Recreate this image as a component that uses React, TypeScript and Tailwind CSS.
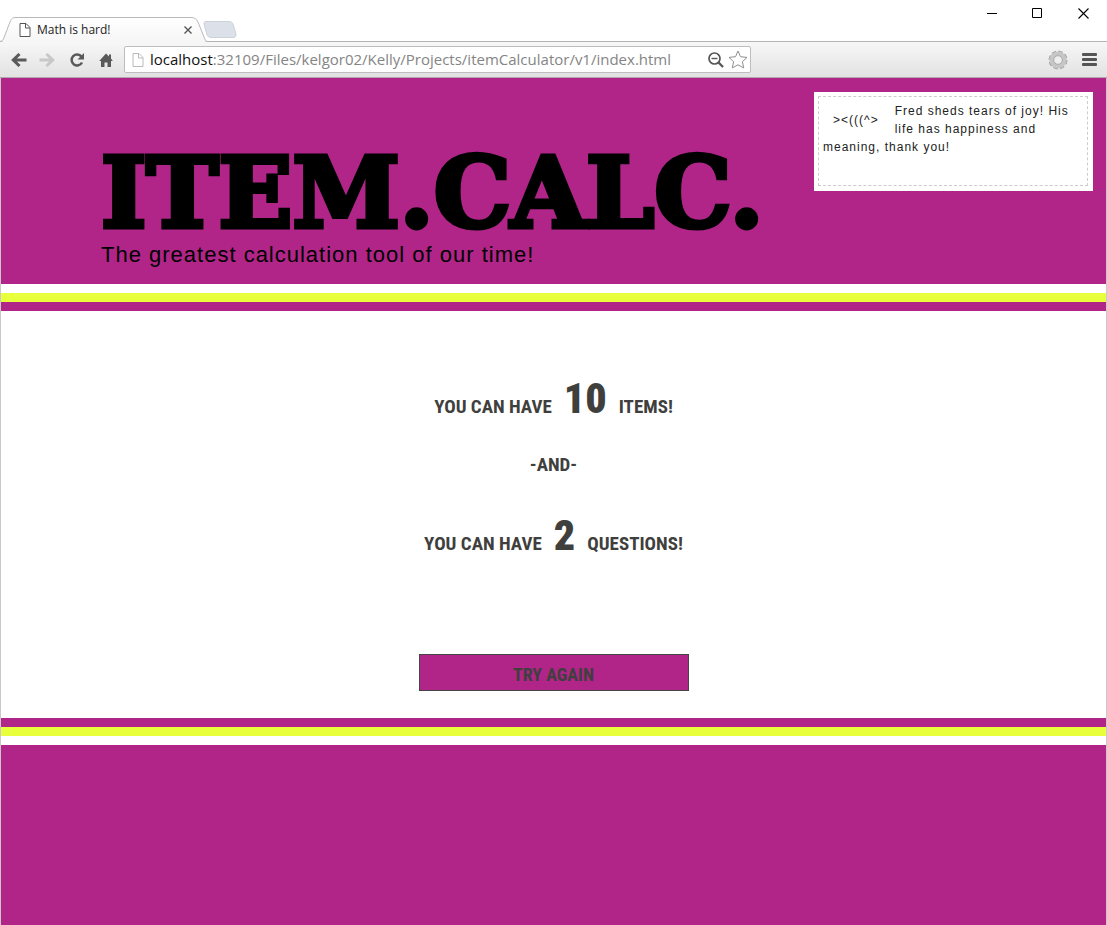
import React from "react";

function PageIcon({ className }: { className: string }) {
  return (
    <svg className={className} width="12" height="16" viewBox="0 0 12 16" fill="#fff" stroke="currentColor" aria-hidden="true">
      <path d="M1 1.5h6l4 4v9H1z" />
      <path d="M6.5 1.5v4.5H11" fill="none" />
    </svg>
  );
}

function TabStrip() {
  return (
    <div className="flex h-[42px] justify-between border-b border-[#b4b4b4] bg-white">
      <div className="flex items-end">
        <div className="relative -mb-px h-[26px] w-[207px]">
          <svg className="absolute inset-0" width="207" height="26" viewBox="0 0 207 26" aria-hidden="true">
            <defs>
              <linearGradient id="tab" x1="0" y1="0" x2="0" y2="1">
                <stop offset="0" stopColor="#ffffff" />
                <stop offset="1" stopColor="#f6f6f6" />
              </linearGradient>
            </defs>
            <path
              d="M0 25.5C3 25 4 22 5 19L10 6C11.500 2 13 1.500 16 1.500H191C195 1.500 196.500 3 198 6L204 21C205 24 206 25 207 25.500"
              fill="url(#tab)"
              stroke="#b9b9b9"
            />
            <path d="M3 25.500H205" stroke="#f6f6f6" />
          </svg>
          <div className="relative flex h-full items-center pr-[14px] pl-[19px] text-[#222]">
            <PageIcon className="mt-0.5 text-[#555]" />
            <span className="mt-0.5 ml-1.5 flex-1 text-[12px]">Math is hard!</span>
            <button type="button" aria-label="Close tab" className="mt-0.5 text-[#555]">
              <svg width="10" height="10" viewBox="0 0 10 10" stroke="currentColor" strokeWidth="1.4" aria-hidden="true">
                <path d="M1.500 1.500l7 7M8.500 1.500l-7 7" />
              </svg>
            </button>
          </div>
        </div>
        <button type="button" aria-label="New tab" className="mb-[3px] -ml-1">
          <svg width="34" height="17" viewBox="0 0 34 17" aria-hidden="true">
            <path d="M3 .5H26Q29 .5 30 3L33 13Q33.500 16 31 16.500H8Q5 16.500 4 14L1 3Q.5 .5 3 .5Z" fill="#dce0e8" stroke="#cdd1d9" />
          </svg>
        </button>
      </div>
      <div className="flex h-[26px] items-center pr-[18px] text-black">
        <button type="button" aria-label="Minimize">
          <svg width="11" height="11" viewBox="0 0 11 11" stroke="currentColor" aria-hidden="true">
            <path d="M0 5.500H10" />
          </svg>
        </button>
        <button type="button" aria-label="Maximize" className="ml-[34px]">
          <svg width="11" height="11" viewBox="0 0 11 11" stroke="currentColor" fill="none" aria-hidden="true">
            <path d="M.5 .5h9v9h-9z" />
          </svg>
        </button>
        <button type="button" aria-label="Close window" className="ml-[35px]">
          <svg width="11" height="11" viewBox="0 0 11 11" stroke="currentColor" strokeWidth="1.1" aria-hidden="true">
            <path d="M.5 .5l10 10M10.500 .5l-10 10" />
          </svg>
        </button>
      </div>
    </div>
  );
}

function Toolbar() {
  return (
    <div className="flex h-9 items-center border-b border-[#b0a8ae] bg-linear-to-b from-[#f7f7f7] to-[#e2e2e2] pr-[10px] pl-[11px]">
      <button type="button" aria-label="Back" className="text-[#5a5a5a]">
        <svg width="16" height="14" viewBox="0 0 16 14" fill="none" stroke="currentColor" strokeWidth="3" aria-hidden="true">
          <path d="M15.500 7H3M8.500 1L2.300 7l6.200 6" />
        </svg>
      </button>
      <button type="button" aria-label="Forward" className="ml-3 text-[#c8c8c8]">
        <svg width="16" height="14" viewBox="0 0 16 14" fill="none" stroke="currentColor" strokeWidth="3" aria-hidden="true">
          <path d="M.5 7H13M7.500 1l6.200 6-6.200 6" />
        </svg>
      </button>
      <button type="button" aria-label="Reload" className="ml-3.5 text-[#5a5a5a]">
        <svg width="16" height="16" viewBox="0 0 16 16" fill="none" stroke="currentColor" strokeWidth="2.500" aria-hidden="true">
          <path d="M12.500 4.600A5.500 5.500 0 1 0 13 10.500" />
          <path d="M15 1v6.500H8.500z" fill="currentColor" stroke="none" />
        </svg>
      </button>
      <button type="button" aria-label="Home" className="ml-3.5 text-[#5a5a5a]">
        <svg width="14" height="14" viewBox="0 0 14 14" fill="currentColor" aria-hidden="true">
          <path d="M7 .5L10 3.500V1.500h2v4L13.800 8H12v6H8.500V9.500h-3V14H2V8H.2z" />
        </svg>
      </button>
      <div className="ml-[11px] flex h-[27px] w-[627px] items-center rounded-xs border border-[#bdbdbd] bg-white pr-[2px] pl-[7px]">
        <PageIcon className="text-[#bbb]" />
        <p className="ml-1.5 flex-1 text-[15px] whitespace-nowrap text-[#858585]">
          <span className="text-[#111]">localhost</span>
          :32109/Files/kelgor02/Kelly/Projects/itemCalculator/v1/index.html
        </p>
        <button type="button" aria-label="Zoom" className="text-[#555]">
          <svg width="16" height="16" viewBox="0 0 16 16" fill="none" stroke="currentColor" aria-hidden="true">
            <circle cx="6.500" cy="6.500" r="5.500" strokeWidth="1.700" />
            <path d="M3.500 6.500h6" strokeWidth="1.400" />
            <path d="M10.300 10.300l4.700 4.700" strokeWidth="2.300" />
          </svg>
        </button>
        <button type="button" aria-label="Bookmark this page" className="ml-1 text-[#8e8e8e]">
          <svg width="20" height="19" viewBox="0 0 20 19" fill="#fff" stroke="currentColor" strokeLinejoin="round" aria-hidden="true">
            <path d="M10 1l2.500 5.700 6.500.7-4.600 4.300 1.300 6.200L10 14.800l-5.700 3.100 1.300-6.200L1 7.400l6.500-.7z" />
          </svg>
        </button>
      </div>
      <button type="button" aria-label="Extension" className="ml-auto">
        <svg width="20" height="20" viewBox="0 0 20 20" fill="none" aria-hidden="true">
          <circle cx="10" cy="10" r="8" stroke="#a9a9a9" strokeWidth="3" strokeDasharray="4.283 2" />
          <circle cx="10" cy="10" r="6.200" stroke="#c6c6c6" strokeWidth="4.600" />
          <circle cx="10" cy="10" r="4.300" stroke="#aaa" strokeWidth="1" fill="#eee" />
        </svg>
      </button>
      <button type="button" aria-label="Menu" className="ml-3.5 text-[#555]">
        <svg width="15" height="13" viewBox="0 0 15 13" fill="currentColor" aria-hidden="true">
          <rect y="0" width="15" height="3" rx="1" />
          <rect y="5" width="15" height="3" rx="1" />
          <rect y="10" width="15" height="3" rx="1" />
        </svg>
      </button>
    </div>
  );
}

function Result({ count, noun }: { count: number; noun: string }) {
  return (
    <p className="flex items-baseline justify-center gap-3 leading-5">
      <span>YOU CAN HAVE</span>
      <strong className="text-[42px] leading-[54px]">{count}</strong>
      <span>{noun}!</span>
    </p>
  );
}

export default function App() {
  return (
    <div className="flex min-h-screen flex-col bg-white font-['Liberation_Sans',sans-serif]">
      <div className="font-['Open_Sans','Noto_Sans',sans-serif]">
        <TabStrip />
        <Toolbar />
      </div>
      <div className="flex flex-1 flex-col border-x border-[#c9c9c9]">
        <header className="flex h-[206px] items-start justify-between bg-[#b12589] pr-[13px] pl-[100px] text-black">
          <div className="pt-[66px]">
            <h1 className="text-[97px] leading-[98px] font-bold font-['DejaVu_Serif',serif] [-webkit-text-stroke:5px_black]">
              ITEM.CALC.
            </h1>
            <p className="text-[22px] leading-[26px] tracking-[1px]">The greatest calculation tool of our time!</p>
          </div>
          <aside className="mt-[14px] h-[99px] w-[279px] bg-white py-1 pr-[5px] pl-1">
            <div className="h-[90px] border border-dashed border-[#ccc] px-1 pt-[5px] text-[12px] leading-[18px] tracking-[1px] text-[#222]">
              <span className="float-left py-[9px] pr-4 pl-[10px]">&gt;&lt;(((^&gt;</span>
              Fred sheds tears of joy! His life has happiness and meaning, thank you!
            </div>
          </aside>
        </header>
        <div className="mt-[9px] h-[9px] bg-[#e8ff3c]" />
        <div className="h-[9px] bg-[#b12589]" />
        <main className="flex flex-col items-center pt-[61px] pb-[27px] text-[19px] font-bold text-[#3f3f3d] font-['Roboto_Condensed','Liberation_Sans_Narrow',sans-serif]">
          <Result count={10} noun="ITEMS" />
          <p className="mt-[25px] mb-[30px] leading-7">-AND-</p>
          <Result count={2} noun="QUESTIONS" />
          <button
            type="button"
            className="mt-[91px] h-[37px] w-[270px] border border-[#444] bg-[#b12589] pt-1 text-[18px] leading-8"
          >
            TRY AGAIN
          </button>
        </main>
        <div className="h-[9px] bg-[#b12589]" />
        <div className="h-[9px] bg-[#e8ff3c]" />
        <footer className="mt-[9px] min-h-[180px] flex-1 bg-[#b12589]" />
      </div>
    </div>
  );
}
